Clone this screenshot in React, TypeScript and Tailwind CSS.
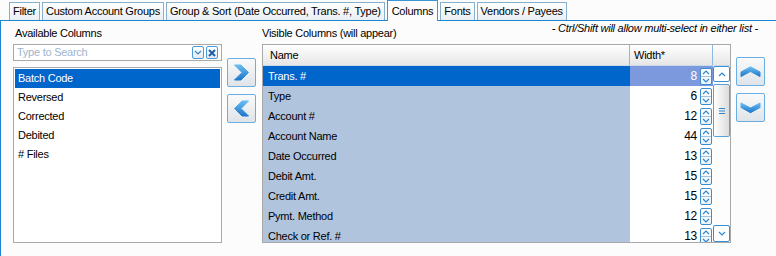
import React from "react";

const tabs = [
  "Filter",
  "Custom Account Groups",
  "Group & Sort (Date Occurred, Trans. #, Type)",
  "Columns",
  "Fonts",
  "Vendors / Payees",
];

const available = ["Batch Code", "Reversed", "Corrected", "Debited", "# Files"];

const visible = [
  { name: "Trans. #", width: 8 },
  { name: "Type", width: 6 },
  { name: "Account #", width: 12 },
  { name: "Account Name", width: 44 },
  { name: "Date Occurred", width: 13 },
  { name: "Debit Amt.", width: 15 },
  { name: "Credit Amt.", width: 15 },
  { name: "Pymt. Method", width: 12 },
  { name: "Check or Ref. #", width: 13 },
];

function SmallChevron({ dir }: { dir: "up" | "down" }) {
  return (
    <svg width="8" height="5" viewBox="0 0 8 5">
      <polyline
        points={dir === "up" ? "1,4 4,1 7,4" : "1,1 4,4 7,1"}
        fill="none"
        stroke="#2f86cc"
        strokeWidth="1.2"
      />
    </svg>
  );
}

function Spinner() {
  return (
    <div className="flex h-[17px] w-[12px] flex-col overflow-hidden rounded-[2px] border border-[#3a8ed0] bg-gradient-to-b from-white to-[#eef3f8]">
      <div className="flex flex-1 items-center justify-center border-b border-[#9cc4e4]">
        <SmallChevron dir="up" />
      </div>
      <div className="flex flex-1 items-center justify-center">
        <SmallChevron dir="down" />
      </div>
    </div>
  );
}

function BigButton({ dir }: { dir: "left" | "right" | "up" | "down" }) {
  const id = "g-" + dir;
  let shape = null;
  if (dir === "right" || dir === "left") {
    const pts =
      dir === "right"
        ? "1.5,1 8,1 15.5,8.5 8,16 1.5,16 9,8.5"
        : "15.5,1 9,1 1.5,8.5 9,16 15.5,16 8,8.5";
    shape = (
      <svg width="17" height="17" viewBox="0 0 17 17">
        <defs>
          <linearGradient id={id} x1="0" y1="0" x2="0" y2="1">
            <stop offset="0" stopColor="#6cbcf0" />
            <stop offset="1" stopColor="#1c78cc" />
          </linearGradient>
        </defs>
        <polygon points={pts} fill={`url(#${id})`} stroke={`url(#${id})`} strokeLinejoin="round" strokeWidth="1" />
      </svg>
    );
  } else {
    const pts =
      dir === "up"
        ? "1,6 10.5,0.8 20,6 20,10.5 10.5,5.5 1,10.5"
        : "1,1 10.5,6 20,1 20,5.5 10.5,10.7 1,5.5";
    shape = (
      <svg width="21" height="12" viewBox="0 0 21 12">
        <defs>
          <linearGradient id={id} x1="0" y1="0" x2="0" y2="1">
            <stop offset="0" stopColor="#6cbcf0" />
            <stop offset="1" stopColor="#1c78cc" />
          </linearGradient>
        </defs>
        <polygon points={pts} fill={`url(#${id})`} stroke={`url(#${id})`} strokeLinejoin="round" strokeWidth="1" />
      </svg>
    );
  }
  return (
    <div className="flex h-[29px] w-[29px] items-center justify-center rounded-[2px] border border-[#6aaee2] bg-gradient-to-b from-[#fafafa] to-[#dfe4e9]">
      {shape}
    </div>
  );
}

export default function App() {
  return (
    <div className="flex h-[256px] w-[776px] flex-col overflow-hidden bg-[#fcfcfc] font-['Liberation_Sans',Arial,sans-serif] text-[11px] tracking-[-0.25px] text-black">
      {/* tabs */}
      <div className="flex h-[20px] items-end gap-[2px] pl-[9px]">
        {tabs.map((t) =>
          t === "Columns" ? (
            <div
              key={t}
              className="relative z-10 -mb-px flex h-[21px] items-center border border-b-0 border-[#3d95d6] bg-[#fcfcfc] px-[4px] leading-none"
            >
              {t}
            </div>
          ) : (
            <div
              key={t}
              className="flex h-[18px] items-center border border-b-0 border-[#86aecd] bg-gradient-to-b from-white to-[#eaeff4] px-[3px] leading-none"
            >
              {t}
            </div>
          )
        )}
      </div>

      {/* panel */}
      <div className="flex flex-1 border-l border-t border-[#1d86d2] pl-[12px]">
        {/* left column */}
        <div className="flex w-[209px] flex-col">
          <div className="mt-[6px] h-[13px] leading-[13px] pl-[2px]">Available Columns</div>
          <div className="mt-[4px] flex h-[17px] items-center border border-[#a9a9a9] bg-white pl-[3px] pr-[3px]">
            <span className="flex-1 text-[#9fb4cc]">Type to Search</span>
            <div className="flex h-[13px] w-[12px] items-center justify-center rounded-[2px] border border-[#4b9ad8] bg-gradient-to-b from-white to-[#e6ecf2]">
              <SmallChevron dir="down" />
            </div>
            <div className="ml-[2px] flex h-[13px] w-[12px] items-center justify-center rounded-[2px] border border-[#4b9ad8] bg-gradient-to-b from-white to-[#e6ecf2]">
              <svg width="8" height="8" viewBox="0 0 8 8">
                <path d="M1 1 L7 7 M7 1 L1 7" stroke="#1b5fa6" strokeWidth="2" />
              </svg>
            </div>
          </div>
          <div className="mt-[6px] h-[176px] border border-[#a9a9a9] bg-white p-px">
            {available.map((a, i) => (
              <div
                key={a}
                className={`flex h-[19px] items-center pl-[3px] ${i === 0 ? "bg-[#0066cc] text-white" : ""}`}
              >
                {a}
              </div>
            ))}
          </div>
        </div>

        {/* add / remove */}
        <div className="ml-[5px] mt-[37px] flex flex-col gap-[7px]">
          <BigButton dir="right" />
          <BigButton dir="left" />
        </div>

        {/* visible columns */}
        <div className="ml-[6px] flex flex-1 flex-col">
          <div className="flex h-[23px] items-start justify-between pr-[18px]">
            <div className="mt-[6px] leading-[13px]">Visible Columns (will appear)</div>
            <div className="mt-[1px] italic leading-[13px]">- Ctrl/Shift will allow multi-select in either list -</div>
          </div>
          <div className="flex">
            <div className="h-[199px] w-[469px] border border-[#a9a9a9] bg-white">
              <div className="flex h-[21px] border-b border-[#c9d9e8] bg-gradient-to-b from-white to-[#e6e6e6]">
                <div className="flex w-[367px] items-center border-r border-[#8fb8dc] pl-[7px]">Name</div>
                <div className="flex w-[83px] items-center border-r border-[#8fb8dc] pl-[4px]">Width*</div>
                <div className="flex-1" />
              </div>
              <div className="flex h-[176px] overflow-hidden">
                <div className="flex w-[450px] flex-col">
                  {visible.map((v, i) => (
                    <div key={v.name} className="flex h-[20px] shrink-0">
                      <div
                        className={`flex w-[367px] items-center pl-[5px] ${
                          i === 0 ? "bg-[#0066cc] text-white" : "bg-[#b0c4de]"
                        }`}
                      >
                        {v.name}
                      </div>
                      <div
                        className={`flex w-[83px] items-center justify-end gap-[3px] pr-[1px] ${
                          i === 0 ? "bg-[#7d99dd] text-white" : "bg-white"
                        }`}
                      >
                        <span className="text-[12px]">{v.width}</span>
                        <Spinner />
                      </div>
                    </div>
                  ))}
                </div>
                {/* scrollbar */}
                <div className="flex w-[17px] flex-col justify-between bg-[#fdfdfd]">
                  <div>
                    <div className="flex h-[16px] items-center justify-center rounded-[2px] border border-[#3a8ed0] bg-white">
                      <SmallChevron dir="up" />
                    </div>
                    <div className="mt-[2px] flex h-[53px] items-center justify-center rounded-[2px] border border-[#5ca2da] bg-gradient-to-r from-white to-[#dcdcdc]">
                      <svg width="6" height="6" viewBox="0 0 6 6">
                        <path d="M0 0.5 H6 M0 3 H6 M0 5.5 H6" stroke="#2f86cc" strokeWidth="1" />
                      </svg>
                    </div>
                  </div>
                  <div className="flex h-[17px] items-center justify-center rounded-[2px] border border-[#3a8ed0] bg-white">
                    <SmallChevron dir="down" />
                  </div>
                </div>
              </div>
            </div>
            <div className="ml-[5px] mt-[13px] flex flex-col gap-[7px]">
              <BigButton dir="up" />
              <BigButton dir="down" />
            </div>
          </div>
        </div>
      </div>
    </div>
  );
}
